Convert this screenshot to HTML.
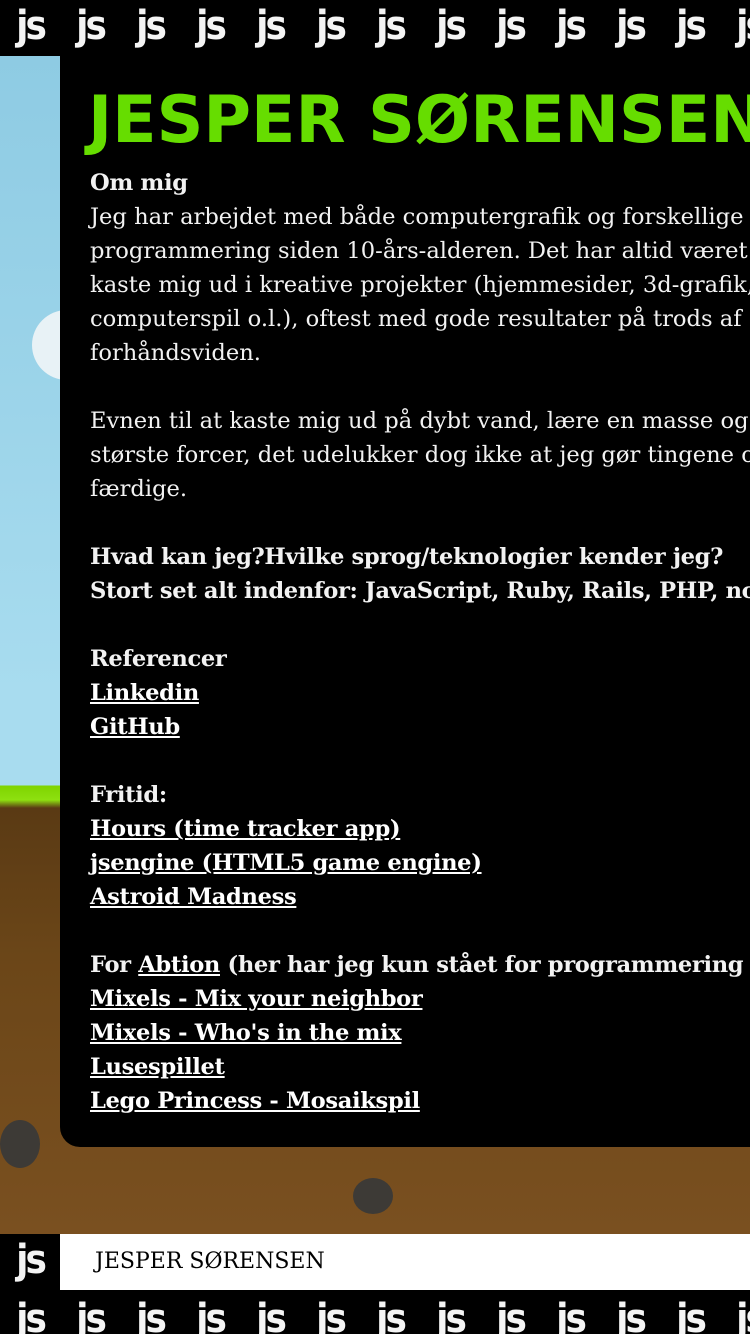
<!DOCTYPE html>
<html><head><meta charset="utf-8"><style>
html,body{margin:0;padding:0;width:750px;height:1334px;overflow:hidden;background:#000}
body{position:relative;font-family:"DejaVu Serif","Liberation Serif",serif}
.tiles{position:absolute;left:0;height:56px;width:750px;overflow:hidden;white-space:nowrap;background:#000}
.tiles span{display:inline-block;width:60px;text-align:center;color:#f4f4f4;font-family:"DejaVu Sans Condensed","DejaVu Sans",sans-serif;font-weight:bold;font-size:40px;line-height:52px;letter-spacing:-3px}
.bg{position:absolute;left:0;top:56px;width:750px;height:1178px;background:linear-gradient(#8ecbe3 0,#a8dcef 640px,#a8dcef 729px,#7fd400 730px,#8ee010 744px,#5a3a14 752px,#6b4618 900px,#7a5020 1178px)}
.cloud{position:absolute;left:32px;top:310px;width:70px;height:70px;border-radius:50%;background:#e8f2f6}
.rock{position:absolute;background:#3d3a36;border-radius:50%}
.panel{position:absolute;left:60px;top:56px;width:720px;height:1091px;background:#000;border-bottom-left-radius:20px;color:#fff}
h1{position:absolute;left:28px;top:30px;margin:0;font-family:"DejaVu Sans",sans-serif;font-weight:bold;font-size:65px;line-height:70px;color:#66dd00;white-space:nowrap}
.txt{position:absolute;left:30px;top:110px;font-size:22.6px;line-height:34px;white-space:nowrap;color:#f2f2f2}
b,a{letter-spacing:-0.35px}
b{font-weight:bold}
a{color:#fff;text-decoration:underline;font-weight:bold}
.foot{position:absolute;left:60px;top:1234px;width:690px;height:56px;background:#fff}
.foot div{position:absolute;left:35px;top:15px;font-size:22px;color:#000}
</style></head><body>
<div class="tiles" style="top:0"><span>js</span><span>js</span><span>js</span><span>js</span><span>js</span><span>js</span><span>js</span><span>js</span><span>js</span><span>js</span><span>js</span><span>js</span><span>js</span></div>
<div class="bg"></div>
<div class="cloud"></div>
<div class="rock" style="left:0;top:1120px;width:40px;height:48px"></div>
<div class="rock" style="left:353px;top:1178px;width:40px;height:36px"></div>
<div class="panel">
<h1>JESPER SØRENSEN</h1>
<div class="txt"><b>Om mig</b><br>Jeg har arbejdet med både computergrafik og forskellige<br>programmering siden 10-års-alderen. Det har altid været<br>kaste mig ud i kreative projekter (hjemmesider, 3d-grafik,<br>computerspil o.l.), oftest med gode resultater på trods af<br>forhåndsviden.<br><br>Evnen til at kaste mig ud på dybt vand, lære en masse og<br>største forcer, det udelukker dog ikke at jeg gør tingene o<br>færdige.<br><br><b>Hvad kan jeg?Hvilke sprog/teknologier kender jeg?</b><br><b>Stort set alt indenfor: JavaScript, Ruby, Rails, PHP, no</b><br><br><b>Referencer</b><br><a>Linkedin</a><br><a>GitHub</a><br><br><b>Fritid:</b><br><a>Hours (time tracker app)</a><br><a>jsengine (HTML5 game engine)</a><br><a>Astroid Madness</a><br><br><b>For <a>Abtion</a> (her har jeg kun stået for programmering</b><br><a>Mixels - Mix your neighbor</a><br><a>Mixels - Who's in the mix</a><br><a>Lusespillet</a><br><a>Lego Princess - Mosaikspil</a></div>
</div>
<div class="tiles" style="top:1234px;width:60px;height:56px"><span>js</span></div>
<div class="foot"><div>JESPER SØRENSEN</div></div>
<div class="tiles" style="top:1290px;height:44px"><span style="line-height:58px">js</span><span style="line-height:58px">js</span><span style="line-height:58px">js</span><span style="line-height:58px">js</span><span style="line-height:58px">js</span><span style="line-height:58px">js</span><span style="line-height:58px">js</span><span style="line-height:58px">js</span><span style="line-height:58px">js</span><span style="line-height:58px">js</span><span style="line-height:58px">js</span><span style="line-height:58px">js</span><span style="line-height:58px">js</span></div>
</body></html>
